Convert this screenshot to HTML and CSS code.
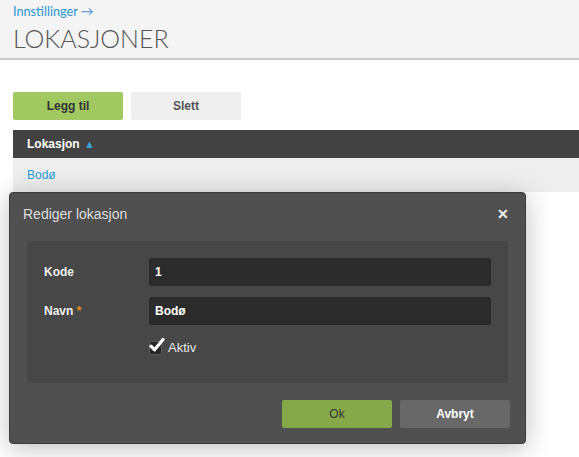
FILE: index.html
```html
<!DOCTYPE html>
<html lang="no">
<head>
<meta charset="utf-8">
<title>Lokasjoner</title>
<link rel="stylesheet" href="styles.css">
</head>
<body>
<header class="page-head">
  <a class="crumb" href="#">Innstillinger <span class="arrow">&rarr;</span></a>
  <h1 class="page-title">LOKASJONER</h1>
</header>

<main class="content">
  <div class="toolbar">
    <button class="btn btn-add">Legg til</button>
    <button class="btn btn-delete">Slett</button>
  </div>

  <table class="grid">
    <thead>
      <tr><th>Lokasjon <span class="sort">&#9650;</span></th></tr>
    </thead>
    <tbody>
      <tr><td><a href="#">Bodø</a></td></tr>
    </tbody>
  </table>
</main>

<div class="dialog" role="dialog">
  <div class="dialog-head">
    <span class="dialog-title">Rediger lokasjon</span>
    <span class="dialog-close">&#10005;</span>
  </div>
  <div class="dialog-body">
    <div class="field">
      <label class="field-label">Kode</label>
      <div class="field-input">1</div>
    </div>
    <div class="field">
      <label class="field-label">Navn <span class="req">*</span></label>
      <div class="field-input">Bodø</div>
    </div>
    <div class="field">
      <span class="field-label"></span>
      <label class="check">
        <span class="check-box">
          <svg width="16" height="15" viewBox="0 0 16 15"><path d="M2 8.2 L5.6 11.8 L14 1.6" fill="none" stroke="#fff" stroke-width="3.2" stroke-linecap="round" stroke-linejoin="round"/></svg>
        </span>
        Aktiv
      </label>
    </div>
  </div>
  <div class="dialog-foot">
    <button class="btn btn-ok">Ok</button>
    <button class="btn btn-cancel">Avbryt</button>
  </div>
</div>
</body>
</html>
```

FILE: styles.css
```css
* { box-sizing: border-box; }

body {
  margin: 0;
  background: #fff;
  font-family: "Liberation Sans", Arial, sans-serif;
  font-size: 12px;
  color: #333;
  position: relative;
  min-height: 457px;
  overflow: hidden;
}

.page-head {
  background: #f4f4f4;
  border-bottom: 2px solid #c9c9c9;
  height: 60px;
  padding: 3px 13px 0;
}

.crumb {
  display: block;
  color: #2a95cf;
  text-decoration: none;
  font-family: Lato, "Liberation Sans", sans-serif;
  font-size: 12.7px;
  line-height: 16px;
}

.crumb .arrow { color: #4a8fd8; }

.page-title {
  margin: 4px 0 0;
  font-family: Lato, "Liberation Sans", sans-serif;
  font-weight: 300;
  font-size: 25px;
  line-height: 30px;
  color: #555;
}

.content {
  padding: 32px 0 0 13px;
}

.toolbar {
  display: flex;
  gap: 8px;
  margin-bottom: 10px;
}

.btn {
  border: 0;
  border-radius: 2px;
  width: 110px;
  height: 28px;
  font-family: "Liberation Sans", Arial, sans-serif;
  font-size: 12px;
  font-weight: bold;
  padding: 0;
}

.btn-add { background: #a2c862; color: #333; }
.btn-delete { background: #eeeeee; color: #555; }

.grid {
  width: calc(100% + 20px);
  border-collapse: collapse;
}

.grid th {
  background: #424242;
  color: #fff;
  text-align: left;
  font-weight: bold;
  height: 28px;
  padding: 0 14px;
}

.sort { color: #3aa3d6; font-size: 11px; margin-left: 1px; }

.grid td {
  background: #eeeeee;
  height: 34px;
  padding: 0 14px;
}

.grid td a { color: #2a9ad6; text-decoration: none; }

/* modal */
.dialog {
  position: absolute;
  left: 9px;
  top: 192px;
  width: 517px;
  height: 252px;
  background: #505050;
  border: 1px solid #3c3c3c;
  border-radius: 4px;
  box-shadow: 0 4px 26px rgba(0, 0, 0, 0.26);
  padding: 0 17px;
}

.dialog-head {
  display: flex;
  justify-content: space-between;
  align-items: center;
  height: 40px;
}

.dialog-title {
  color: #dddddd;
  font-size: 14px;
  margin-left: -4px;
  margin-top: 1px;
}

.dialog-close {
  color: #f2f2f2;
  font-size: 14px;
  font-weight: bold;
  margin-right: -1px;
  margin-top: 1px;
}

.dialog-body {
  margin-top: 8px;
  background: #474747;
  height: 142px;
  padding: 17px 17px 0 17px;
}

.field {
  display: flex;
  align-items: center;
  margin-bottom: 11px;
}

.field-label {
  width: 105px;
  flex: none;
  color: #eeeeee;
  font-weight: bold;
  font-size: 12px;
}

.req { color: #e08a1e; }

.field-input {
  flex: 1;
  height: 28px;
  background: #2b2b2b;
  border-radius: 2px;
  color: #fff;
  font-weight: bold;
  line-height: 28px;
  padding-left: 6px;
}

.check {
  display: flex;
  align-items: center;
  gap: 6px;
  color: #e6e6e6;
  font-weight: normal;
  font-size: 13px;
  margin-top: 4px;
}

.check-box {
  position: relative;
  width: 13px;
  height: 14px;
  background: #262626;
  border: 1px solid #5a5a5a;
  border-radius: 2px;
}

.check-box svg {
  position: absolute;
  left: -1px;
  top: -4px;
}

.dialog-foot {
  display: flex;
  justify-content: flex-end;
  gap: 8px;
  margin-top: 17px;
  margin-right: -2px;
}

.btn-ok { background: #86a84a; color: #333; font-weight: normal; }
.btn-cancel { background: #686868; color: #fff; }
```
